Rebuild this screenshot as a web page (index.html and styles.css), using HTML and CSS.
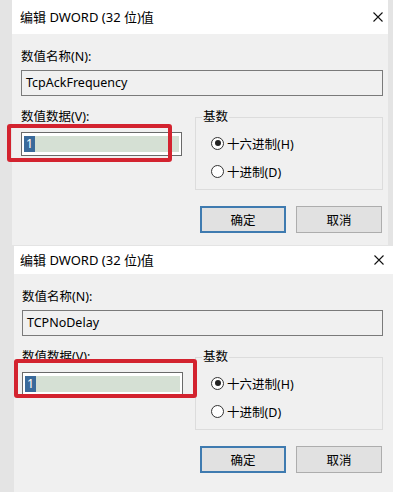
FILE: index.html
```html
<!DOCTYPE html>
<html lang="zh-CN">
<head>
  <meta charset="UTF-8">
  <meta name="viewport" content="width=device-width, initial-scale=1.0">
  <title>编辑 DWORD</title>
  <link rel="stylesheet" href="styles.css">
</head>
<body>

<div class="dialog dialog-first">
  <div class="titlebar">
    <span class="title">编辑 DWORD (32 位)值</span>
    <svg class="close" width="10" height="10" viewBox="0 0 10 10"><path d="M0.5 0.5L9.5 9.5M9.5 0.5L0.5 9.5" stroke="#111" stroke-width="1.1" fill="none"/></svg>
  </div>
  <div class="dialog-body">
    <div class="field-label">数值名称(N):</div>
    <div class="name-box">TcpAckFrequency</div>
    <div class="row">
      <div class="data-col">
        <div class="field-label">数值数据(V):</div>
        <div class="data-box"><div class="data-text"><span class="selected">1</span></div></div>
      </div>
      <fieldset class="base-group">
        <legend>基数</legend>
        <div class="radios">
          <div class="radio"><span class="radio-dot checked"></span>十六进制(H)</div>
          <div class="radio"><span class="radio-dot"></span>十进制(D)</div>
        </div>
      </fieldset>
    </div>
    <div class="buttons">
      <button class="btn btn-default">确定</button>
      <button class="btn">取消</button>
    </div>
    <div class="mark mark-first"></div>
  </div>
</div>

<div class="dialog dialog-second">
  <div class="titlebar">
    <span class="title">编辑 DWORD (32 位)值</span>
    <svg class="close" width="10" height="10" viewBox="0 0 10 10"><path d="M0.5 0.5L9.5 9.5M9.5 0.5L0.5 9.5" stroke="#111" stroke-width="1.1" fill="none"/></svg>
  </div>
  <div class="dialog-body">
    <div class="field-label">数值名称(N):</div>
    <div class="name-box">TCPNoDelay</div>
    <div class="row">
      <div class="data-col">
        <div class="field-label">数值数据(V):</div>
        <div class="data-box"><div class="data-text"><span class="selected">1</span></div></div>
      </div>
      <fieldset class="base-group">
        <legend>基数</legend>
        <div class="radios">
          <div class="radio"><span class="radio-dot checked"></span>十六进制(H)</div>
          <div class="radio"><span class="radio-dot"></span>十进制(D)</div>
        </div>
      </fieldset>
    </div>
    <div class="buttons">
      <button class="btn btn-default">确定</button>
      <button class="btn">取消</button>
    </div>
    <div class="mark mark-second"></div>
  </div>
</div>

</body>
</html>
```

FILE: styles.css
```css
body {
  margin: 0;
  padding: 0;
  width: 393px;
  height: 492px;
  overflow: hidden;
  background-color: #e4e4e4;
  font-family: "Noto Sans", "Noto Sans CJK SC", sans-serif;
  font-size: 12.5px;
  color: #000;
}

.dialog {
  background-color: #f0f0f0;
  box-sizing: border-box;
}

.dialog-first {
  margin-left: 12px;
  width: 376px;
}

.dialog-second {
  margin-left: 14px;
  margin-top: 1px;
  width: 379px;
}

.titlebar {
  display: flex;
  align-items: center;
  justify-content: space-between;
  background-color: #fff;
}

.dialog-first .titlebar {
  height: 34px;
  padding: 0 5px 0 8px;
}

.dialog-second .titlebar {
  height: 28px;
  padding: 0 9px 0 6px;
}

.title {
  font-size: 13px;
  line-height: 16px;
}

.dialog-body {
  position: relative;
  padding-top: 15px;
  padding-bottom: 12px;
}

.dialog-first .dialog-body {
  padding-left: 9px;
  padding-right: 5px;
}

.dialog-second .dialog-body {
  padding-left: 8px;
  padding-right: 10px;
  padding-bottom: 30px;
}

.field-label {
  line-height: 16px;
}

.name-box {
  margin-top: 5px;
  height: 26px;
  box-sizing: border-box;
  border: 1px solid #7a7a7a;
  padding-left: 4px;
  line-height: 24px;
  background-color: #f0f0f0;
}

.row {
  display: flex;
  justify-content: space-between;
  margin-top: 13px;
}

.data-col {
  width: 161px;
}

.data-box {
  margin-top: 7px;
  height: 24px;
  box-sizing: border-box;
  border: 1px solid #6a6a6a;
  background-color: #fff;
  padding: 3px 2px;
}

.data-text {
  height: 100%;
  background-color: #d5e0d4;
  line-height: 16px;
}

.selected {
  display: inline-block;
  background-color: #3a6a9b;
  color: #fff;
  padding: 0 2px;
  height: 16px;
}

.base-group {
  width: 188px;
  box-sizing: border-box;
  margin: 0;
  padding: 0 0 0 6px;
  border: 1px solid #dcdcdc;
}

.base-group legend {
  padding: 0 1px;
  line-height: 16px;
}

.radios {
  display: flex;
  flex-direction: column;
  gap: 8px;
  padding: 8px 0 8px 9px;
}

.radio {
  display: flex;
  align-items: center;
  height: 20px;
}

.radio-dot {
  width: 13px;
  height: 13px;
  box-sizing: border-box;
  border: 1px solid #333;
  border-radius: 50%;
  background-color: #fff;
  margin-right: 3px;
  display: flex;
  align-items: center;
  justify-content: center;
}

.radio-dot.checked::after {
  content: "";
  width: 6px;
  height: 6px;
  border-radius: 50%;
  background-color: #222;
}

.buttons {
  display: flex;
  justify-content: flex-end;
  gap: 10px;
  margin-top: 16px;
  padding-right: 1px;
}

.btn {
  width: 86px;
  height: 27px;
  box-sizing: border-box;
  border: 1px solid #adadad;
  background-color: #e1e1e1;
  font-family: "Noto Sans", "Noto Sans CJK SC", sans-serif;
  font-size: 12.5px;
  color: #000;
  padding: 0;
}

.btn-default {
  border: 2px solid #3f7bb0;
}

.mark {
  position: absolute;
  box-sizing: border-box;
  border: 4px solid #d3232f;
  border-radius: 3px;
}

.mark-first {
  left: -5px;
  top: 90px;
  width: 165px;
  height: 38px;
}

.mark-second {
  left: 0;
  top: 85px;
  width: 183px;
  height: 39px;
}
```
